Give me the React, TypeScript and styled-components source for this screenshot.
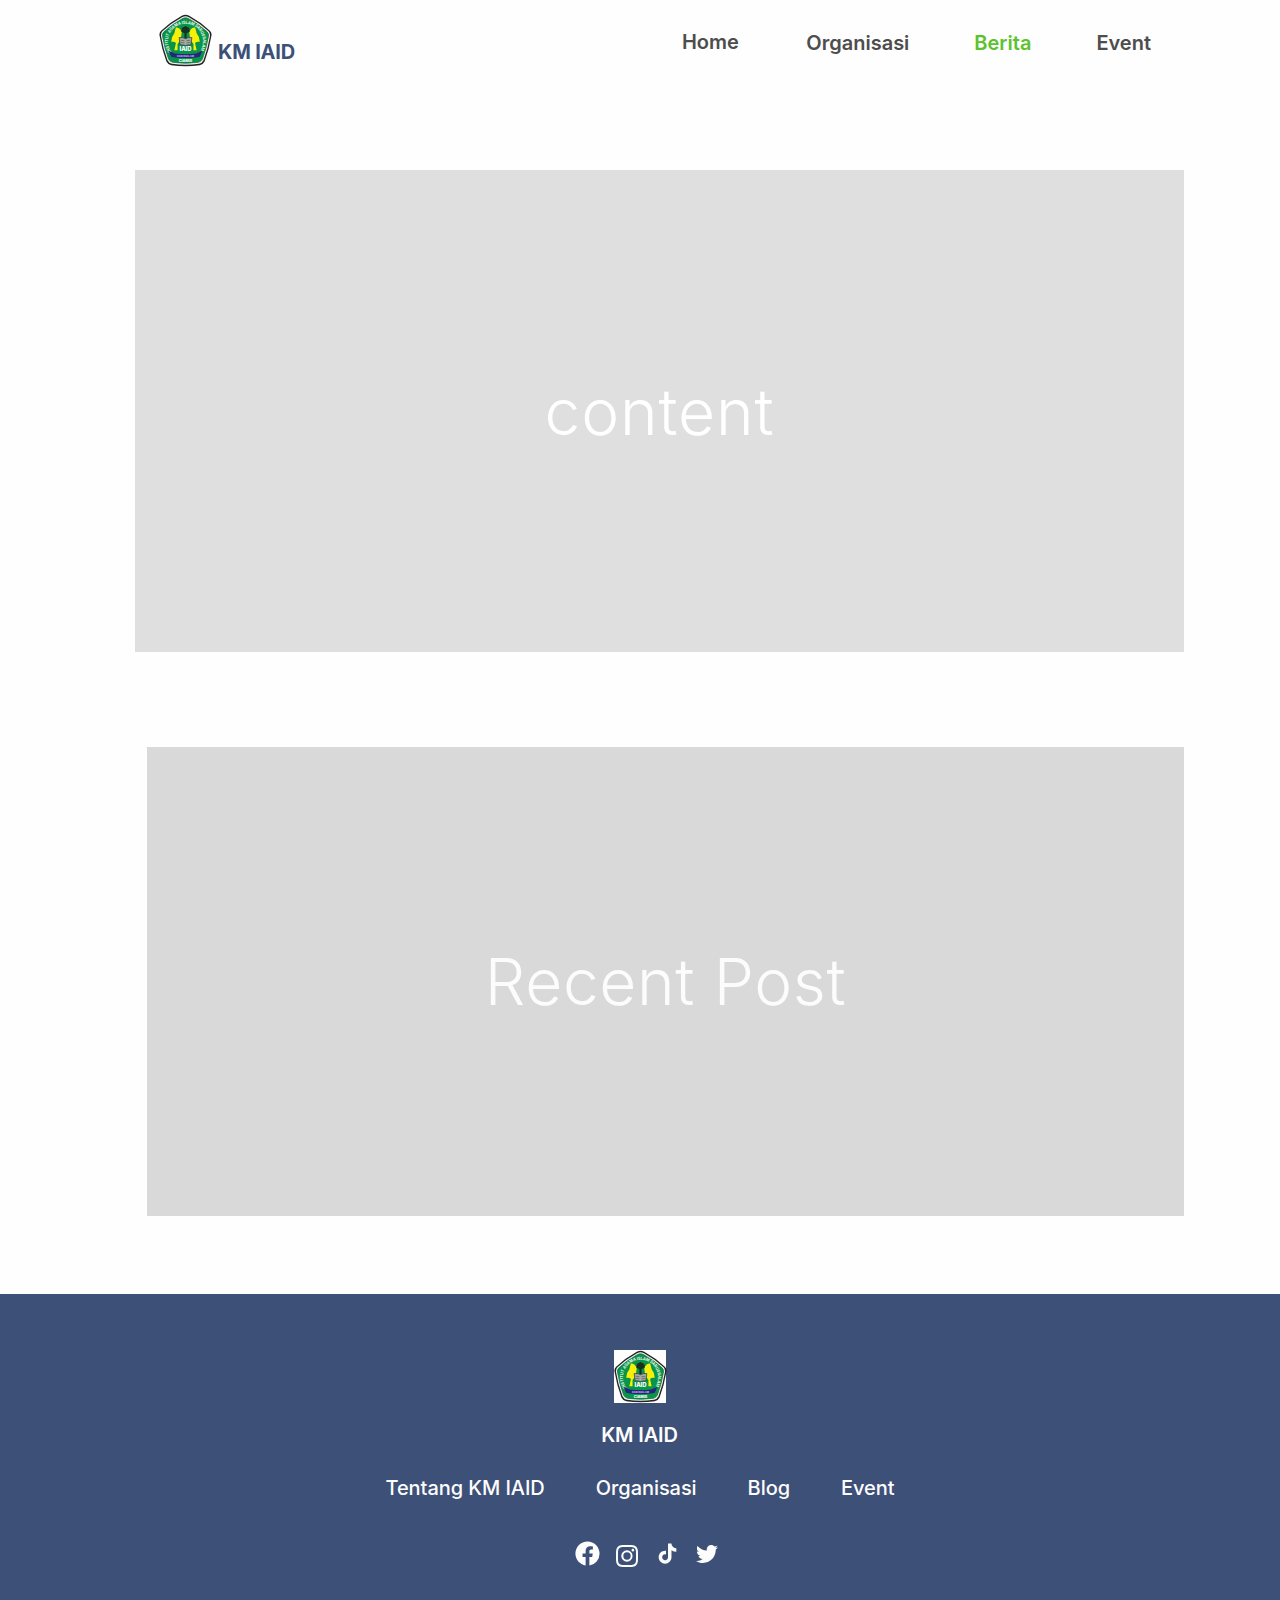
import React from "react";
import styled, { createGlobalStyle } from "styled-components";
import { BsInstagram } from "react-icons/bs";
import { FaTwitter } from "react-icons/fa";

const Global = createGlobalStyle`
  * { box-sizing: border-box; }
  body { margin: 0; background: #fefefe; font-family: Inter, "Liberation Sans", sans-serif; }
`;

const Page = styled.div`
  width: 1280px;
  height: 1600px;
  display: flex;
  flex-direction: column;
  overflow: hidden;
`;

const Header = styled.header`
  height: 170px;
  padding: 14px 129px 0 159px;
  display: flex;
  align-items: flex-start;
  justify-content: space-between;
`;

const Brand = styled.div`
  display: flex;
  gap: 6px;
`;

const BrandName = styled.span<{ $light?: boolean }>`
  font-size: 20px;
  line-height: 24px;
  font-weight: ${(p) => (p.$light ? 600 : 700)};
  letter-spacing: ${(p) => (p.$light ? "-0.15px" : "-0.2px")};
  white-space: nowrap;
  color: ${(p) => (p.$light ? "#fdfdfd" : "#3d5078")};
  margin-top: ${(p) => (p.$light ? "20px" : "26px")};
  margin-right: ${(p) => (p.$light ? "1px" : "0")};
`;

const Nav = styled.nav`
  display: flex;
  gap: 65px;
  padding-top: 16px;
`;

const NavLink = styled.a<{ $active?: boolean; $raised?: boolean }>`
  font-size: 20px;
  line-height: 24px;
  font-weight: 600;
  color: ${(p) => (p.$active ? "#5dc22f" : "#4d4d4d")};
  margin-top: ${(p) => (p.$raised ? "0" : "1px")};
  margin-right: ${(p) => (p.$raised ? "2.5px" : "0")};
`;

const Panel = styled.section<{ $recent?: boolean }>`
  display: flex;
  flex: none;
  align-items: center;
  justify-content: center;
  height: ${(p) => (p.$recent ? "469px" : "482px")};
  margin: ${(p) => (p.$recent ? "95px 96px 0 147px" : "0 96px 0 135px")};
  background: ${(p) => (p.$recent ? "#d9d9d9" : "#dfdfdf")};
  color: ${(p) => (p.$recent ? "#fcfcfc" : "#ffffff")};
`;

const PanelTitle = styled.h2<{ $spacing: number }>`
  margin: 0;
  padding-top: 1px;
  font-size: 64px;
  line-height: 78px;
  font-weight: 300;
  letter-spacing: ${(p) => p.$spacing}px;
`;

const Footer = styled.footer`
  flex: 1;
  margin-top: 78px;
  padding-top: 56px;
  display: flex;
  flex-direction: column;
  align-items: center;
  background: #3d5077;
`;

const CrestBox = styled.div`
  width: 52px;
  height: 53px;
  background: #fefefe;
`;

const FooterNav = styled.nav`
  display: flex;
  gap: 51px;
  margin-top: 29px;
`;

const FooterLink = styled.a`
  font-size: 20px;
  line-height: 24px;
  font-weight: 500;
  letter-spacing: -0.06px;
  color: #fdfdfd;
`;

const Socials = styled.div`
  display: flex;
  align-items: center;
  gap: 16px;
  margin: 39px 0 0 14px;
  color: #fdfdfd;
`;

const SocialIcon = styled.span<{ $drop?: number }>`
  display: flex;
  width: 24px;
  height: 28px;
  align-items: center;
  justify-content: center;
  padding-top: ${(p) => p.$drop ?? 0}px;

  svg {
    flex: none;
  }
`;

const CrestSvg = styled.svg`
  display: block;
  width: 53px;
  height: 53px;
`;

const shield = "M50 3 Q53 3 57 5 Q79 17 96 33 Q100 37 99 42 Q95 67 86 91 Q83 97 77 98 Q50 102 23 98 Q17 97 14 91 Q5 67 1 42 Q0 37 4 33 Q21 17 43 5 Q47 3 50 3Z";

function Crest({ id }: { id: string }) {
  return (
    <CrestSvg viewBox="0 2 100 99" aria-label="IAID">
      <defs>
        <path id={id} d="M23 72 A33 33 0 1 1 77 72" />
      </defs>
      <path d={shield} fill="#222523" />
      <g transform="translate(50 52) scale(.945) translate(-50 -52)">
        <path d={shield} fill="#f1f4f2" />
      </g>
      <g transform="translate(50 52) scale(.885) translate(-50 -52)">
        <path d={shield} fill="#08954a" stroke="#16653a" strokeWidth="1.5" />
      </g>
      <text fill="#eef8ef" fontSize="8" fontWeight="700" textLength="141" lengthAdjust="spacingAndGlyphs">
        <textPath href={`#${id}`}>INSTITUT AGAMA ISLAM DARUSSALAM</textPath>
      </text>
      <path d="M43 35 Q38 26 32 27 Q30 32 29 38 Q23 45 23 54 Q29 53 32 56 L29 70 H35 V58 L41 50Z" fill="#f7ef08" />
      <path d="M57 35 Q62 26 68 27 Q70 32 71 38 Q77 45 77 54 Q71 53 68 56 L71 70 H65 V58 L59 50Z" fill="#f7ef08" />
      <path d="M50 24 L57 28 58 35 52 38 V48 H48 V38 L42 35 43 28Z" fill="#173020" />
      <path d="M38 46 Q45 45 50 48 Q56 45 62 46 L60 60 Q54 59 50 61 Q45 59 40 60Z" fill="#a5aaa4" stroke="#37463b" strokeWidth="1.5" />
      <path d="M41 51 L48 52 M52 52 L59 51 M41 55 L48 56 M52 56 L59 55" stroke="#525c52" strokeWidth="1.3" />
      <text x="50" y="72" fill="#fff" fontSize="11" fontWeight="800" textAnchor="middle">IAID</text>
      <path d="M18 71 L30 76 Q50 78 70 76 L82 71 L77 82 L67 84 Q50 85 33 84 L23 82Z" fill="#25257f" />
      <text x="50" y="82" fill="#c8cbe8" fontSize="4.5" fontWeight="700" textAnchor="middle">DARUSSALAM</text>
      <text x="50" y="92" fill="#fff" fontSize="7" fontWeight="800" textAnchor="middle">CIAMIS</text>
    </CrestSvg>
  );
}

function FacebookIcon() {
  return (
    <svg width="29" height="29" viewBox="0 0 24 24" fill="currentColor">
      <path d="M12 2.04c-5.5 0-10 4.49-10 10.02 0 5 3.66 9.15 8.44 9.9v-7H7.9v-2.9h2.54V9.85c0-2.51 1.49-3.89 3.78-3.89 1.09 0 2.23.19 2.23.19v2.47h-1.26c-1.24 0-1.63.77-1.63 1.56v1.88h2.78l-.45 2.9h-2.33v7a10 10 0 0 0 8.44-9.9c0-5.53-4.5-10.02-10-10.02z" />
    </svg>
  );
}

function TiktokIcon() {
  return (
    <svg width="27" height="27" viewBox="0 0 24 24" fill="currentColor">
      <path d="M16.6 5.82A4.278 4.278 0 0 1 15.54 3h-3.09v12.4a2.592 2.592 0 0 1-2.59 2.5c-1.42 0-2.6-1.16-2.6-2.6 0-1.72 1.66-3.01 3.37-2.48V9.66c-3.45-.46-6.47 2.22-6.47 5.64 0 3.33 2.76 5.7 5.69 5.7 3.14 0 5.69-2.55 5.69-5.7V9.01a7.35 7.35 0 0 0 4.3 1.38V7.3s-1.88.09-3.24-1.48z" />
    </svg>
  );
}

export default function App() {
  return (
    <Page>
      <Global />
      <Header>
        <Brand>
          <Crest id="header-arc" />
          <BrandName>KM IAID</BrandName>
        </Brand>
        <Nav>
          <NavLink $raised>Home</NavLink>
          <NavLink>Organisasi</NavLink>
          <NavLink $active>Berita</NavLink>
          <NavLink>Event</NavLink>
        </Nav>
      </Header>
      <Panel><PanelTitle $spacing={0.9}>content</PanelTitle></Panel>
      <Panel $recent><PanelTitle $spacing={0.65}>Recent Post</PanelTitle></Panel>
      <Footer>
        <CrestBox><Crest id="footer-arc" /></CrestBox>
        <BrandName $light>KM IAID</BrandName>
        <FooterNav>
          <FooterLink>Tentang KM IAID</FooterLink>
          <FooterLink>Organisasi</FooterLink>
          <FooterLink>Blog</FooterLink>
          <FooterLink>Event</FooterLink>
        </FooterNav>
        <Socials>
          <SocialIcon><FacebookIcon /></SocialIcon>
          <SocialIcon $drop={6}><BsInstagram size={22} /></SocialIcon>
          <SocialIcon><TiktokIcon /></SocialIcon>
          <SocialIcon $drop={1}><FaTwitter size={22} /></SocialIcon>
        </Socials>
      </Footer>
    </Page>
  );
}
